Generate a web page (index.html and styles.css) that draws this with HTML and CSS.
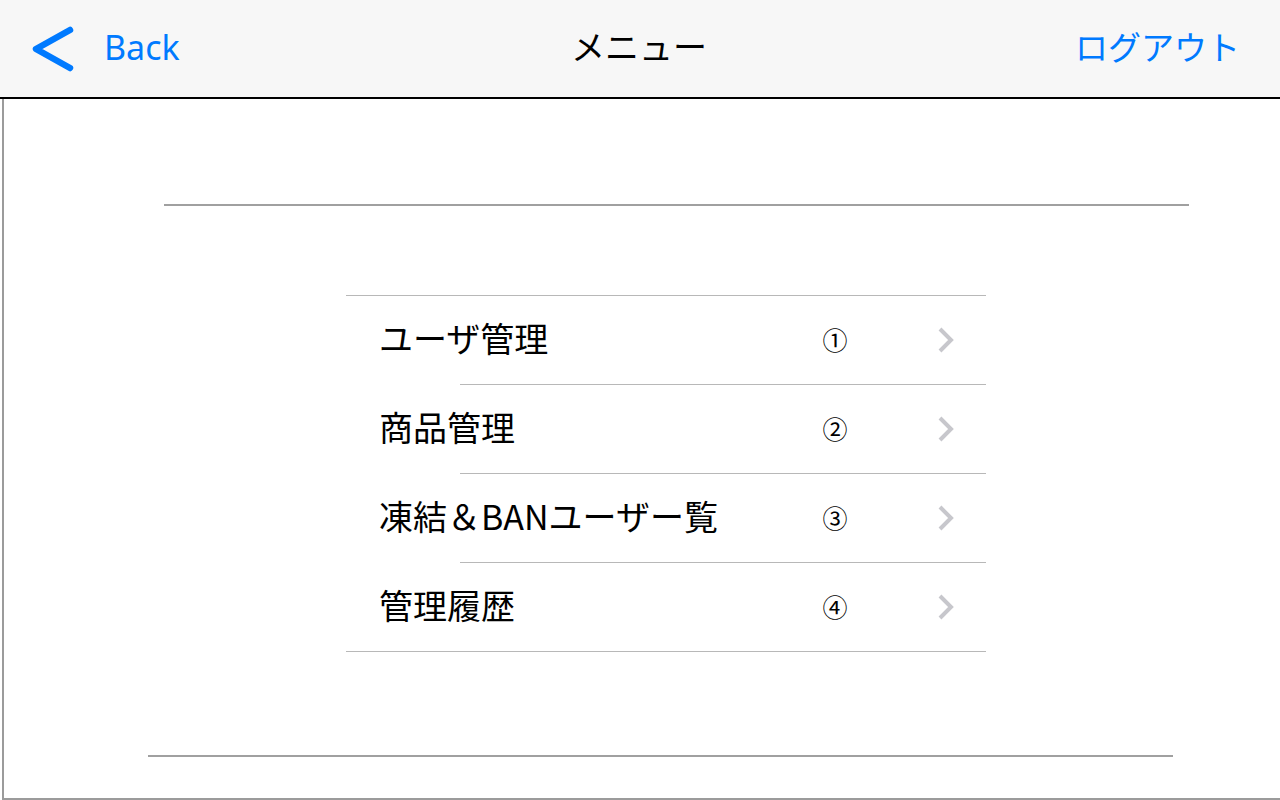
FILE: index.html
```html
<!DOCTYPE html>
<html lang="ja">
<head>
<meta charset="utf-8">
<title>メニュー</title>
<link rel="stylesheet" href="styles.css">
</head>
<body>
<header class="navbar">
  <a class="nav-back" href="#">
    <svg class="back-icon" width="46" height="48" viewBox="0 0 46 48" aria-hidden="true">
      <polyline points="40,5 6,24 40,43" fill="none" stroke="#007aff" stroke-width="6.5" stroke-linecap="round" stroke-linejoin="round"/>
    </svg>
    <span class="back-label">Back</span>
  </a>
  <h1 class="nav-title">メニュー</h1>
  <a class="nav-action" href="#">ログアウト</a>
</header>
<main class="content">
  <div class="rule rule-top"></div>
  <ul class="menu-list">
    <li class="menu-row"><span class="menu-label">ユーザ管理</span><span class="menu-num">①</span><svg class="chev" width="18" height="28" viewBox="0 0 18 28"><polyline points="3,3 14,14 3,25" fill="none" stroke="#c7c7cc" stroke-width="4"/></svg></li>
    <li class="menu-row"><span class="menu-label">商品管理</span><span class="menu-num">②</span><svg class="chev" width="18" height="28" viewBox="0 0 18 28"><polyline points="3,3 14,14 3,25" fill="none" stroke="#c7c7cc" stroke-width="4"/></svg></li>
    <li class="menu-row"><span class="menu-label">凍結＆BANユーザー覧</span><span class="menu-num">③</span><svg class="chev" width="18" height="28" viewBox="0 0 18 28"><polyline points="3,3 14,14 3,25" fill="none" stroke="#c7c7cc" stroke-width="4"/></svg></li>
    <li class="menu-row last"><span class="menu-label">管理履歴</span><span class="menu-num">④</span><svg class="chev" width="18" height="28" viewBox="0 0 18 28"><polyline points="3,3 14,14 3,25" fill="none" stroke="#c7c7cc" stroke-width="4"/></svg></li>
  </ul>
  <div class="rule rule-bottom"></div>
</main>
</body>
</html>
```

FILE: styles.css
```css
* { box-sizing: border-box; }
html, body {
  margin: 0;
  padding: 0;
  width: 1280px;
  height: 800px;
  overflow: hidden;
  background: #ffffff;
  font-family: "Noto Sans CJK JP", "Noto Sans", sans-serif;
  color: #000;
}
.navbar {
  height: 99px;
  background: #f7f7f7;
  border-bottom: 2px solid #000;
  display: grid;
  grid-template-columns: 1fr auto 1fr;
  align-items: center;
  padding: 0 40px 0 30px;
}
.nav-back {
  display: flex;
  align-items: center;
  text-decoration: none;
  color: #007aff;
  justify-self: start;
}
.back-icon { display: block; }
.back-label {
  font-family: "Noto Sans", "Noto Sans CJK JP", sans-serif;
  font-size: 34px;
  margin-left: 28px;
  line-height: 1;
  padding-bottom: 4px;
}
.nav-title {
  margin: 0;
  font-size: 34px;
  font-weight: 400;
  line-height: 1;
  padding-bottom: 5px;
  padding-left: 8px;
}
.nav-action {
  justify-self: end;
  color: #007aff;
  text-decoration: none;
  font-size: 33px;
  line-height: 1;
  padding-bottom: 5px;
}
.content {
  margin-left: 2px;
  width: 1300px;
  height: 701px;
  border: 2px solid #9b9b9b;
  border-top: none;
  padding-top: 105px;
}
.rule {
  width: 1025px;
  height: 2px;
  background: #a0a0a0;
}
.rule-top { margin-left: 160px; }
.rule-bottom { margin-left: 144px; margin-top: 103px; }
.menu-list {
  list-style: none;
  margin: 89px 0 0 342px;
  padding: 0;
  width: 640px;
  border-top: 1px solid #b8b8b8;
}
.menu-row {
  height: 89px;
  display: flex;
  align-items: center;
  padding: 0 31px 1px 33px;
  background: linear-gradient(#b8b8b8, #b8b8b8) no-repeat 114px 100% / calc(100% - 114px) 1px;
}
.menu-row.last {
  background: none;
  border-bottom: 1px solid #b8b8b8;
  height: 89px;
  padding-bottom: 0;
}
.menu-label {
  width: 432px;
  font-size: 34px;
  line-height: 1;
  padding-bottom: 5px;
}
.menu-num {
  width: 48px;
  text-align: center;
  font-size: 25px;
  line-height: 1;
  padding-bottom: 2px;
}
.chev { margin-left: auto; display: block; }
```
